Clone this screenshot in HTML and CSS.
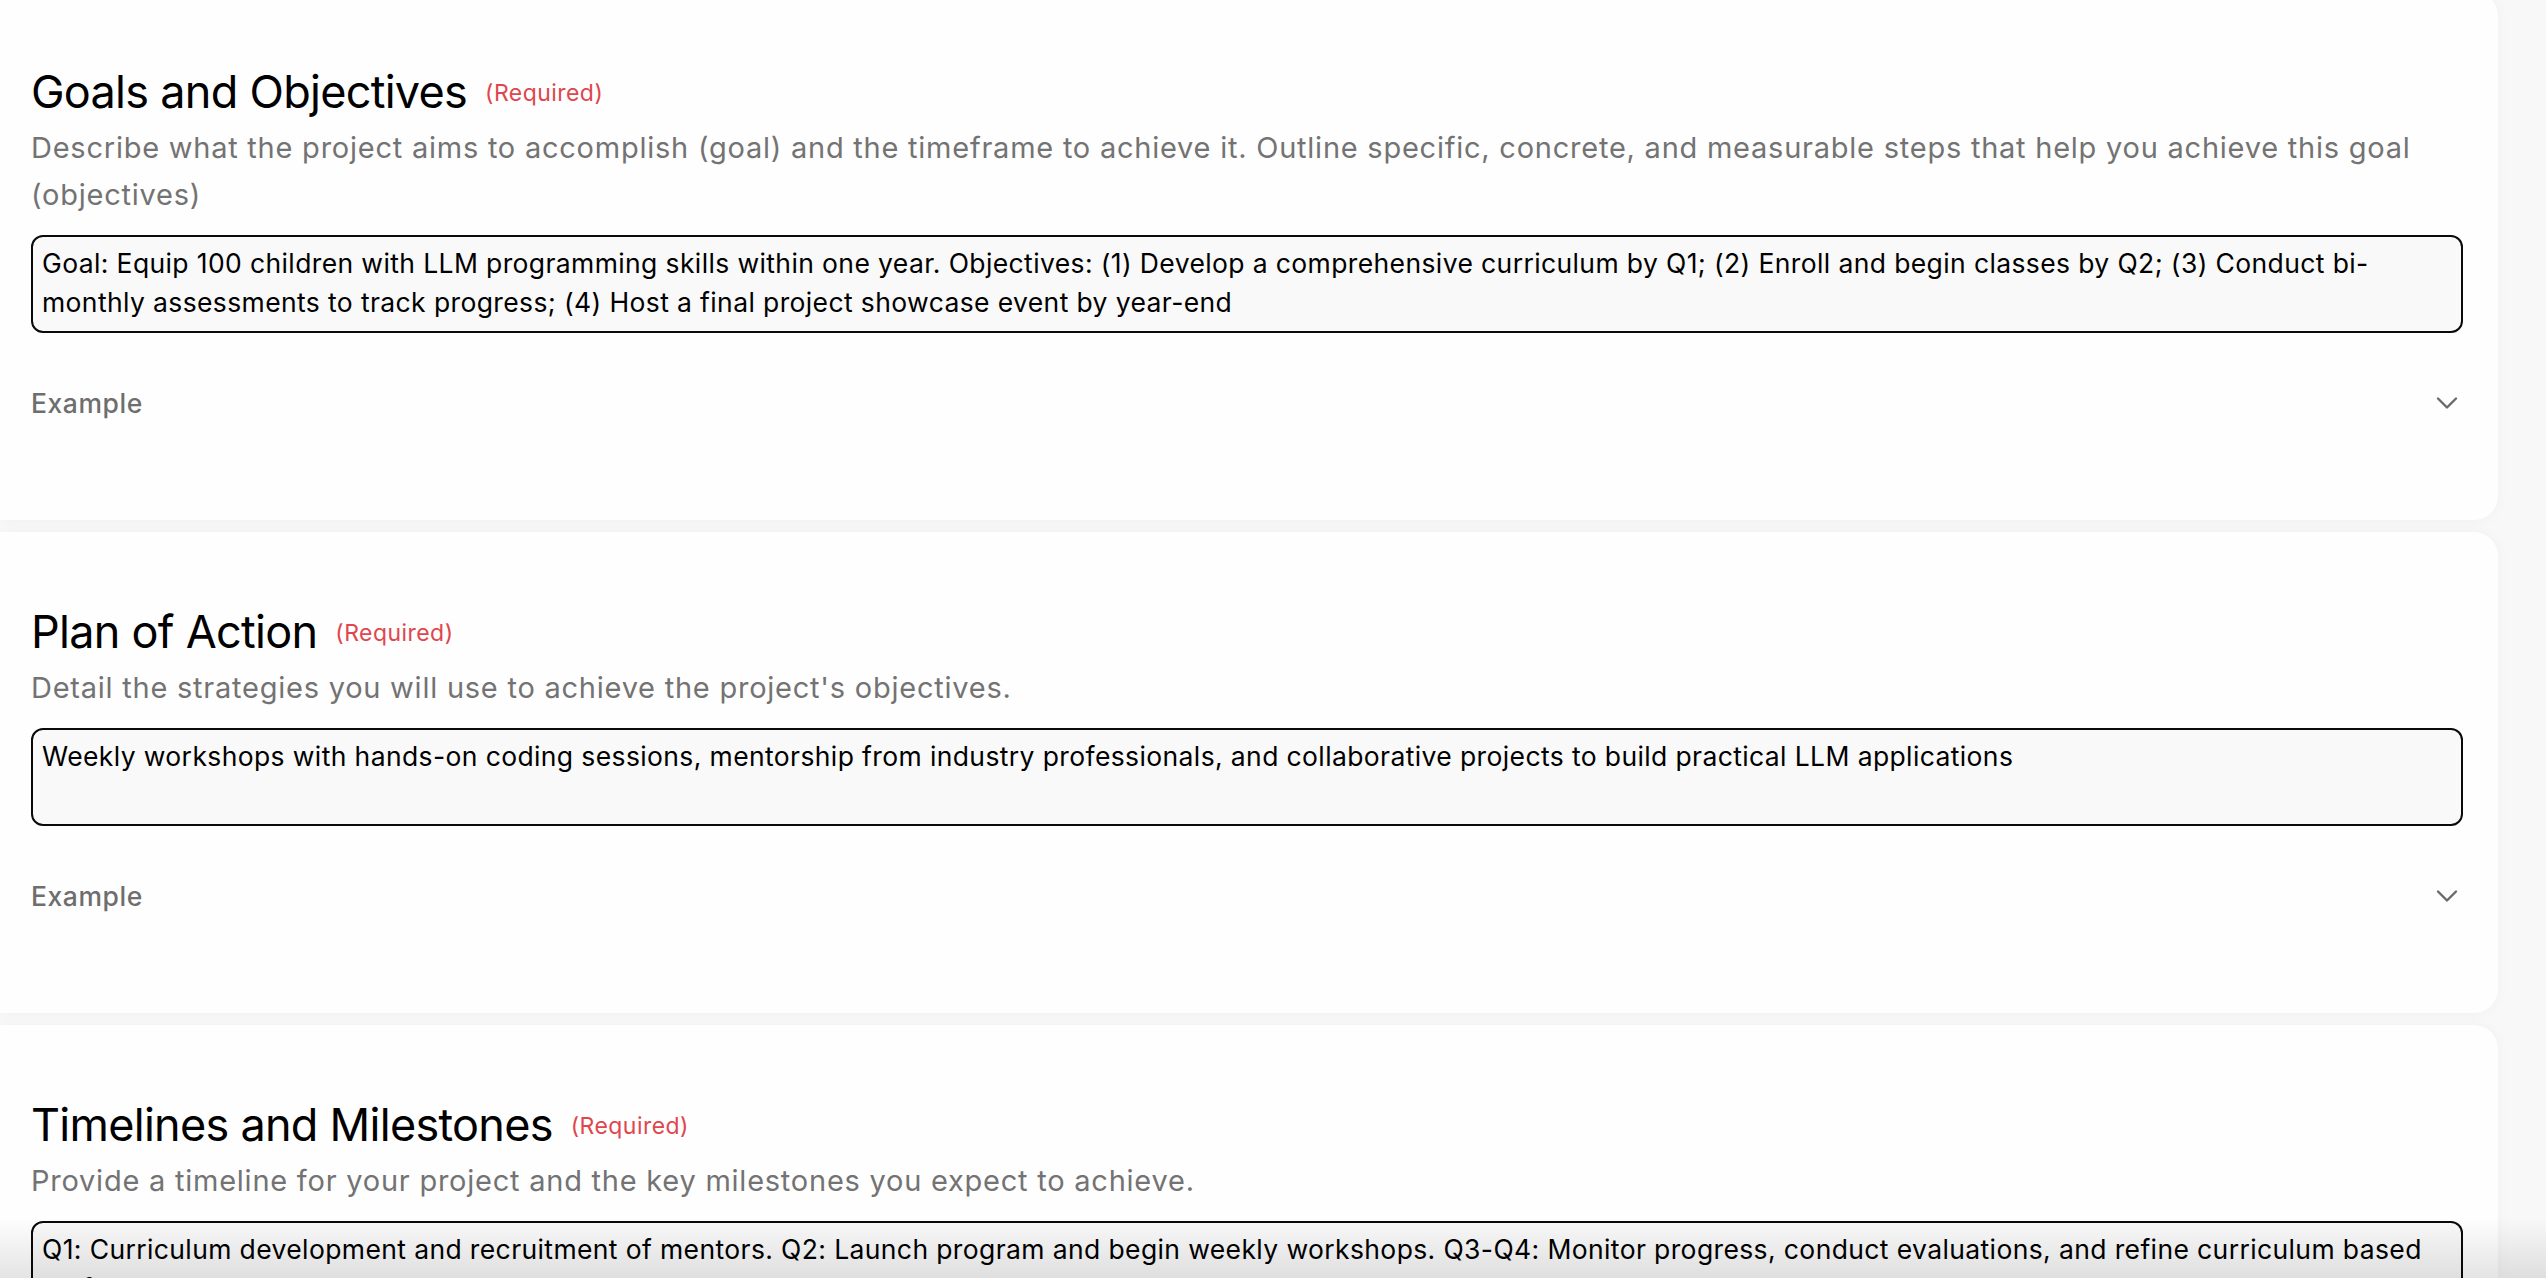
FILE: index.html
```html
<!DOCTYPE html>
<html lang="en">
<head>
<meta charset="utf-8">
<title>Project Proposal</title>
<link rel="stylesheet" href="styles.css">
</head>
<body>
<main class="stack">
  <section class="card">
    <div class="head">
      <h2 class="title">Goals and Objectives</h2>
      <span class="req">(Required)</span>
    </div>
    <p class="desc">Describe what the project aims to accomplish (goal) and the timeframe to achieve it. Outline specific, concrete, and measurable steps that help you achieve this goal (objectives)</p>
    <div class="field">Goal: Equip 100 children with LLM programming skills within one year. Objectives: (1) Develop a comprehensive curriculum by Q1; (2) Enroll and begin classes by Q2; (3) Conduct bi-monthly assessments to track progress; (4) Host a final project showcase event by year-end</div>
    <div class="example">
      <span class="ex-label">Example</span>
      <svg class="chev" viewBox="0 0 24 24" width="36" height="36" aria-hidden="true"><path d="M6 9l6 6 6-6" fill="none" stroke="currentColor" stroke-width="1.6" stroke-linecap="round" stroke-linejoin="round"/></svg>
    </div>
  </section>

  <section class="card">
    <div class="head">
      <h2 class="title">Plan of Action</h2>
      <span class="req">(Required)</span>
    </div>
    <p class="desc">Detail the strategies you will use to achieve the project's objectives.</p>
    <div class="field">Weekly workshops with hands-on coding sessions, mentorship from industry professionals, and collaborative projects to build practical LLM applications</div>
    <div class="example">
      <span class="ex-label">Example</span>
      <svg class="chev" viewBox="0 0 24 24" width="36" height="36" aria-hidden="true"><path d="M6 9l6 6 6-6" fill="none" stroke="currentColor" stroke-width="1.6" stroke-linecap="round" stroke-linejoin="round"/></svg>
    </div>
  </section>

  <section class="card">
    <div class="head">
      <h2 class="title">Timelines and Milestones</h2>
      <span class="req">(Required)</span>
    </div>
    <p class="desc">Provide a timeline for your project and the key milestones you expect to achieve.</p>
    <div class="field">Q1: Curriculum development and recruitment of mentors. Q2: Launch program and begin weekly workshops. Q3-Q4: Monitor progress, conduct evaluations, and refine curriculum based on feedback</div>
    <div class="example">
      <span class="ex-label">Example</span>
      <svg class="chev" viewBox="0 0 24 24" width="36" height="36" aria-hidden="true"><path d="M6 9l6 6 6-6" fill="none" stroke="currentColor" stroke-width="1.6" stroke-linecap="round" stroke-linejoin="round"/></svg>
    </div>
  </section>
</main>
<div class="fade" aria-hidden="true"></div>
</body>
</html>
```

FILE: styles.css
```css
* { box-sizing: border-box; }

html, body {
  margin: 0;
  padding: 0;
  background: #f8f8f8;
  font-family: Inter, "Noto Sans", "Liberation Sans", sans-serif;
  color: #000;
  overflow: hidden;
}

.stack {
  display: flex;
  flex-direction: column;
  gap: 12px;
  margin-top: -8px;
  width: 2498px;
}

.card {
  background: #fefefe;
  border-radius: 0 24px 24px 0;
  box-shadow: 0 0 14px rgba(0, 0, 0, 0.035);
  padding: 72px 35px 97px 31px;
}

.head {
  display: flex;
  align-items: center;
  gap: 18px;
  margin-bottom: 5px;
}

.title {
  margin: 0;
  font-size: 45px;
  font-weight: 400;
  line-height: 55px;
  letter-spacing: -0.72px;
  color: #000;
}

.req {
  font-size: 23px;
  line-height: 28px;
  letter-spacing: 0.45px;
  color: #e0464e;
  margin-top: 2px;
}

.desc {
  margin: 0 0 17px;
  font-size: 29px;
  line-height: 47px;
  letter-spacing: 0.76px;
  color: #737373;
}

.field {
  height: 98px;
  border: 2px solid #0a0a0a;
  border-radius: 12px;
  background: #f9f9f9;
  padding: 7px 10px 0 9px;
  font-size: 26.5px;
  line-height: 39px;
  letter-spacing: 0.38px;
  color: #000;
  overflow: hidden;
}

.example {
  display: flex;
  align-items: center;
  justify-content: space-between;
  height: 40px;
  margin-top: 50px;
}

.ex-label {
  font-size: 26.5px;
  font-weight: 500;
  letter-spacing: 0.55px;
  color: #6e6e6e;
  line-height: 40px;
}

.chev {
  color: #6a6a6a;
  margin-right: -2px;
  display: block;
}

.fade {
  position: fixed;
  left: 0;
  right: 0;
  bottom: 0;
  height: 60px;
  pointer-events: none;
  background: linear-gradient(to bottom, rgba(0, 0, 0, 0), rgba(0, 0, 0, 0.1));
}
```
